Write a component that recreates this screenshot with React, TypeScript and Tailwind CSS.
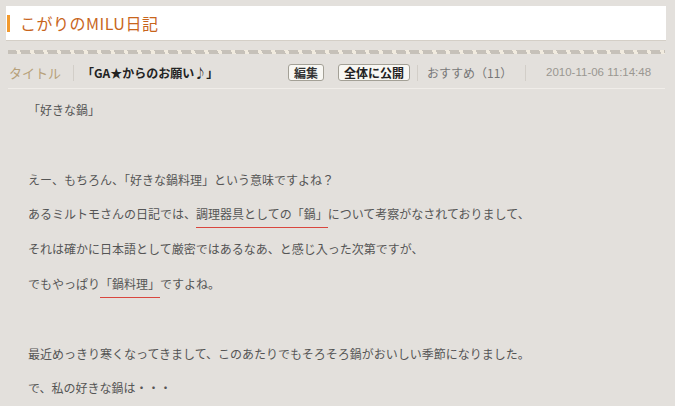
function Marked({ children }: { children: React.ReactNode }) {
  return (
    <span className="inline-flex flex-col">
      <span className="leading-[16px] pb-[5px]">{children}</span>
      <span className="h-px bg-[#d9463e]" />
    </span>
  );
}

export default function App() {
  const jp = { fontFamily: '"Noto Sans CJK JP", "Noto Sans", sans-serif' };
  return (
    <div className="w-[675px] h-[406px] overflow-hidden bg-[#e3e0dc] pt-[6px]" style={jp}>
      {/* blog header */}
      <div className="ml-[6px] w-[660px] h-[34px] bg-white flex items-center shadow-[0_1px_0_#d4cfc7]">
        <span className="ml-[1px] w-[3px] h-[17px] bg-[#f29a2e]" />
        <h1 className="ml-[10px] text-[16px] leading-none text-[#c8651c] tracking-[0.5px]">こがりのMILU日記</h1>
      </div>

      {/* striped divider */}
      <div className="mt-[10px] ml-[8px] w-[657px] h-[4px] bg-[repeating-linear-gradient(70deg,#c6c1b9_0px,#c6c1b9_9px,#f1ebdf_9px,#f1ebdf_12.6px)]" />

      {/* entry meta */}
      <div className="mt-[3px] ml-[8px] w-[657px] h-[31px] flex items-center">
        <span className="ml-[1px] w-[55px] text-[13px] text-[#b7a17a]">タイトル</span>
        <span className="ml-[9px] w-px h-[16px] bg-[#d2cec8]" />
        <span className="ml-[8px] w-[206px] text-[12px] font-bold text-[#222]">「GA★からのお願い♪」</span>
        <button className="h-[17px] px-[5px] text-[12px] leading-none font-bold text-[#333] border border-[#a3a096] rounded-[3px] bg-[#f8f7f3]">編集</button>
        <button className="ml-[14px] h-[17px] px-[5px] text-[12px] leading-none font-bold text-[#222] border border-[#a3a096] rounded-[3px] bg-[#f8f7f3]">全体に公開</button>
        <span className="ml-[7px] w-px h-[16px] bg-[#d2cec8]" />
        <span className="ml-[9px] w-[98px] text-[12px] text-[#777]">おすすめ（11）</span>
        <span className="w-px h-[16px] bg-[#d2cec8]" />
        <span className="ml-[20px] text-[11.5px] text-[#9a9791]" style={{ fontFamily: '"Liberation Sans", Arial, sans-serif' }}>2010-11-06 11:14:48</span>
      </div>
      <div className="ml-[8px] w-[657px] h-px bg-[#f0ede9]" />

      {/* entry body */}
      <div className="pt-[4px] pl-[28px] text-[12px] leading-[34.8px] text-[#555]">
        <p>「好きな鍋」</p>
        <p>&nbsp;</p>
        <p>えー、もちろん、「好きな鍋料理」という意味ですよね？</p>
        <p>
          あるミルトモさんの日記では、<Marked>調理器具としての「鍋」</Marked>について考察がなされておりまして、
        </p>
        <p>それは確かに日本語として厳密ではあるなあ、と感じ入った次第ですが、</p>
        <p>
          でもやっぱり<Marked>「鍋料理」</Marked>ですよね。
        </p>
        <p>&nbsp;</p>
        <p>最近めっきり寒くなってきまして、このあたりでもそろそろ鍋がおいしい季節になりました。</p>
        <p>で、私の好きな鍋は・・・</p>
      </div>
    </div>
  );
}
